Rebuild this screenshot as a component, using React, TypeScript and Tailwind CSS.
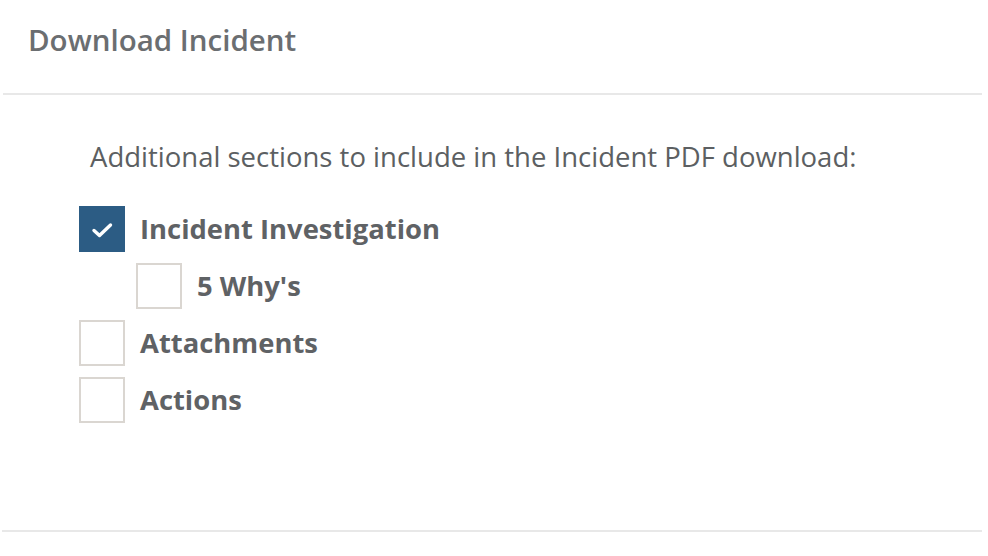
import { useState } from 'react';

type Item = { id: string; label: string; nested?: boolean };

const items: Item[] = [
  { id: 'investigation', label: 'Incident Investigation' },
  { id: 'whys', label: "5 Why's", nested: true },
  { id: 'attachments', label: 'Attachments' },
  { id: 'actions', label: 'Actions' },
];

function Box({ checked }: { checked: boolean }) {
  return (
    <span
      className={`flex h-[46px] w-[46px] shrink-0 items-center justify-center border-2 ${
        checked ? 'border-[#2c5c84] bg-[#2c5c84]' : 'border-[#dad6d1] bg-white'
      }`}
    >
      {checked && (
        <svg width="24" height="20" viewBox="0 0 24 20" fill="none" className="mt-[2px]">
          <path d="M4 10.5l5.5 5L20.5 5" stroke="white" strokeWidth="3.4" strokeLinecap="round" strokeLinejoin="round" />
        </svg>
      )}
    </span>
  );
}

export default function App() {
  const [checked, setChecked] = useState<Record<string, boolean>>({ investigation: true });

  return (
    <div className="h-[556px] w-[988px] bg-white font-['Open_Sans',sans-serif]">
      <div className="px-[28px] pt-[20px] pb-[33px] text-[29.5px] font-semibold leading-[40px] text-[#6b6e71]">
        Download Incident
      </div>
      <div className="ml-[3px] mr-[6px] h-[2px] bg-[#e8e8e8]" />
      <div className="h-[435px] px-[79px] pt-[44px]">
        <p className="ml-[11px] text-[27.5px] leading-[36px] text-[#5c5f62]">
          Additional sections to include in the Incident PDF download:
        </p>
        <div className="mt-[31px] flex flex-col gap-[11px]">
          {items.map((it) => (
            <label
              key={it.id}
              className={`flex cursor-pointer items-center gap-[15px] ${it.nested ? 'pl-[57px]' : ''}`}
              onClick={() => setChecked((c) => ({ ...c, [it.id]: !c[it.id] }))}
            >
              <Box checked={!!checked[it.id]} />
              <span className="text-[27.4px] leading-[36px] font-bold text-[#5f6265]">{it.label}</span>
            </label>
          ))}
        </div>
      </div>
      <div className="ml-[2px] mr-[6px] h-[2px] bg-[#e8e8e8]" />
    </div>
  );
}
